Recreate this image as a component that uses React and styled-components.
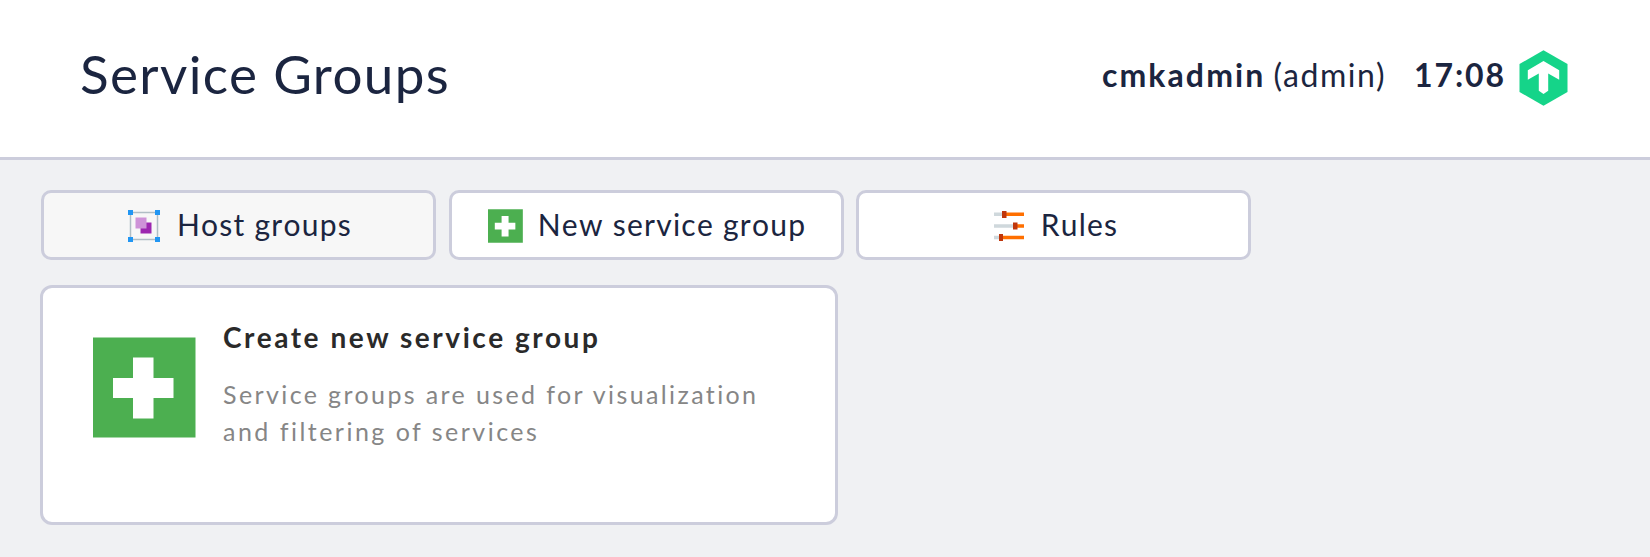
import React from "react";
import styled, { createGlobalStyle } from "styled-components";

const GlobalStyle = createGlobalStyle`
  * { box-sizing: border-box; }
  body { margin: 0; background: #f0f1f3; font-family: Lato, sans-serif; color: #1b2540; }
  h1, h2, p { margin: 0; }
`;

const Page = styled.div`
  min-height: 557px;
  background: #f0f1f3;
`;

const Header = styled.header`
  display: flex;
  align-items: center;
  justify-content: space-between;
  height: 160px;
  padding: 0 82px 7px 80px;
  background: #fff;
  border-bottom: 3px solid #cccddc;
`;

const Title = styled.h1`
  padding-bottom: 2px;
  font-size: 53px;
  line-height: 62px;
  font-weight: 400;
  letter-spacing: 1.36px;
`;

const UserInfo = styled.div`
  display: flex;
  align-items: center;
  font-size: 32px;
  line-height: 40px;
  white-space: nowrap;
`;

const UserName = styled.span`
  font-weight: 700;
  letter-spacing: 2.1px;
`;

const UserRole = styled.span`
  margin-left: 8px;
  letter-spacing: 1.57px;
`;

const Clock = styled.span`
  margin: 0 13px 0 28px;
  font-weight: 700;
  letter-spacing: 1.9px;
`;

const Logo = styled.svg`
  width: 49px;
  height: 56px;
  margin-top: 5px;
`;

const Content = styled.main`
  padding: 30px 40px;
`;

const Toolbar = styled.nav`
  display: flex;
  gap: 12.5px;
  margin-left: 1px;
`;

const ToolButton = styled.button`
  display: flex;
  align-items: center;
  justify-content: center;
  gap: 15px;
  width: 395px;
  height: 70px;
  padding: 0 0 2px 2px;
  border: 3px solid #cccddc;
  border-radius: 10px;
  background: ${(p) => (p.$active ? "#f7f7f7" : "#fff")};
  color: inherit;
  font: 400 30px/38px Lato, sans-serif;
  font-kerning: none;
  letter-spacing: 1.25px;
`;

const ToolIcon = styled.svg`
  width: 35px;
  height: 34px;
  flex: none;
  margin-top: 3px;
`;

const Card = styled.section`
  display: flex;
  gap: 27px;
  width: 798px;
  height: 240px;
  margin-top: 25px;
  padding: 31px 50px;
  border: 3px solid #cccddc;
  border-radius: 12px;
  background: #fff;
`;

const CardIcon = styled.svg`
  width: 103px;
  height: 101px;
  margin-top: 18px;
  flex: none;
`;

const CardTitle = styled.h2`
  color: #2a2a2a;
  font-size: 28px;
  line-height: 36px;
  letter-spacing: 2.56px;
`;

const CardText = styled.p`
  margin-top: 21px;
  color: #868686;
  font-size: 25px;
  line-height: 37px;
`;

const TextLine = styled.span`
  display: block;
  letter-spacing: ${(p) => p.$tracking}px;
  white-space: nowrap;
`;

const GroupIcon = () => (
  <ToolIcon viewBox="0 0 35 34">
    <path d="M3 3.5H30M3 30.5H30M3.5 3V31M30.5 3V31" stroke="#b0bec5" strokeWidth="1.5" fill="none" />
    <path d="M13.5 13.5h11v11h-11z" fill="#9c27b0" />
    <path d="M8.5 8.5h11v11h-11z" fill="#ce93d8" />
    <path d="M1 1h5v5H1zM28 1h5v5h-5zM1 28h5v5H1zM28 28h5v5h-5z" fill="#2196f3" />
  </ToolIcon>
);

const AddIcon = ({ as: Frame }) => (
  <Frame viewBox="0 0 103 101" preserveAspectRatio="none">
    <path d="M0 .5h102.5v100H0z" fill="#4caf50" />
    <path d="M40 20.5h20.5V41h20v20h-20v20.5H40V61H20V41h20z" fill="#fff" />
  </Frame>
);

const SlidersIcon = () => (
  <ToolIcon viewBox="0 0 35 34">
    <path d="M3 5.3h10M3 17h21M3 28.5h7" stroke="#cfd8dc" strokeWidth="3.4" />
    <path d="M13 5.3h20M24 17h9M10 28.5h23" stroke="#ff6f00" strokeWidth="3.4" />
    <path d="M11 2h4.5v7H11zM22 13.5h4.5v7H22zM8 25h4v7H8z" fill="#bf360c" />
  </ToolIcon>
);

export default function App() {
  return (
    <>
      <GlobalStyle />
      <Page>
        <Header>
          <Title>Service Groups</Title>
          <UserInfo>
            <UserName>cmkadmin</UserName>
            <UserRole>(admin)</UserRole>
            <Clock>17:08</Clock>
            <Logo viewBox="0 0 49 56">
              <path d="M24.5.3 48.5 14v28L24.5 55.7.5 42V14z" fill="#15d489" />
              <path d="m24.5 11 15.7 9.3v9.5l-11-6.3v17.3l-4.7 3.2-4.7-3.2V23.5l-11 6.3v-9.5z" fill="#fff" />
            </Logo>
          </UserInfo>
        </Header>
        <Content>
          <Toolbar>
            <ToolButton $active><GroupIcon />Host groups</ToolButton>
            <ToolButton><AddIcon as={ToolIcon} />New service group</ToolButton>
            <ToolButton><SlidersIcon />Rules</ToolButton>
          </Toolbar>
          <Card>
            <AddIcon as={CardIcon} />
            <div>
              <CardTitle>Create new service group</CardTitle>
              <CardText>
                <TextLine $tracking={2.39}>Service groups are used for visualization </TextLine>
                <TextLine $tracking={2.48}>and filtering of services</TextLine>
              </CardText>
            </div>
          </Card>
        </Content>
      </Page>
    </>
  );
}
